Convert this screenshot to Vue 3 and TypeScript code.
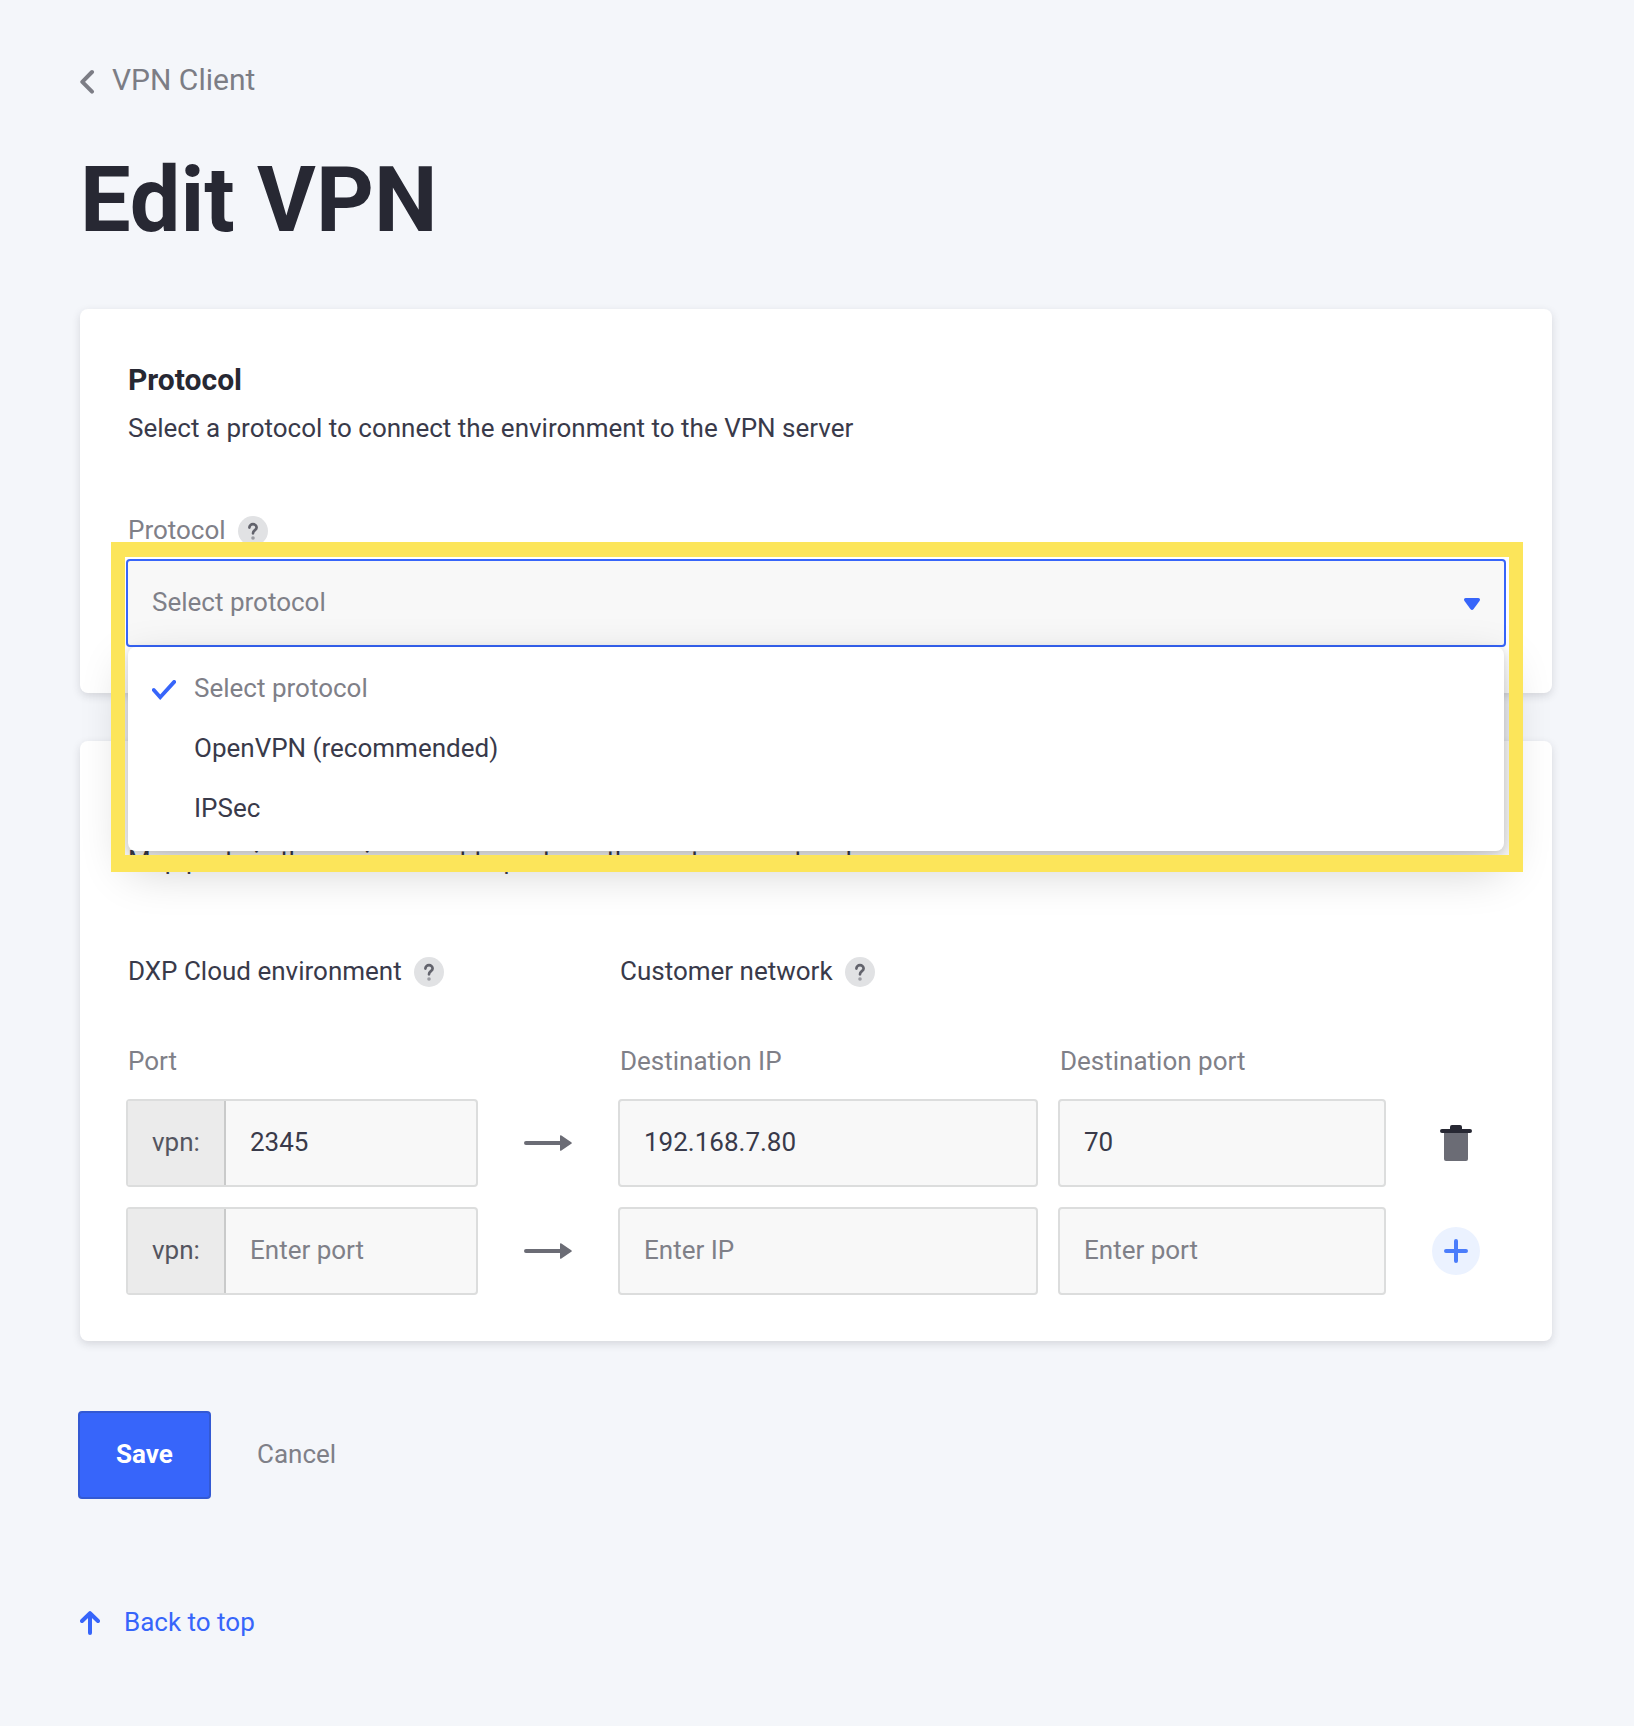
<script setup lang="ts">
import { h, ref } from 'vue'
import type { FunctionalComponent } from 'vue'

interface Forward {
  port: string
  ip: string
  destination: string
}

const protocols: string[] = ['Select protocol', 'OpenVPN (recommended)', 'IPSec']
const selected = ref<number>(0)

const forwards = ref<Forward[]>([
  { port: '2345', ip: '192.168.7.80', destination: '70' },
  { port: '', ip: '', destination: '' },
])

const HelpIcon: FunctionalComponent = () =>
  h('svg', { width: 30, height: 30, viewBox: '0 0 30 30', fill: 'none' }, [
    h('circle', { cx: 15, cy: 15, r: 15, fill: '#e1e2e4' }),
    h('path', {
      d: 'M11.4 11.6C11.4 9.6 13 8.2 15 8.2S18.6 9.6 18.6 11.5C18.6 14.2 15 14.2 15 17.3',
      stroke: '#62636c',
      'stroke-width': 2.7,
      'stroke-linecap': 'round',
    }),
    h('circle', { cx: 15, cy: 22, r: 1.8, fill: '#9b9ca2' }),
  ])
</script>

<template>
  <main class="page">
    <nav class="crumb">
      <svg width="16" height="26" viewBox="0 0 16 26" fill="none">
        <path d="M12 3 2.3 12.8 12 22.6" stroke="#7c7d85" stroke-width="4" stroke-linecap="round" stroke-linejoin="round" />
      </svg>
      <span>VPN Client</span>
    </nav>
    <h1>Edit VPN</h1>

    <section class="card">
      <h2>Protocol</h2>
      <p class="desc">Select a protocol to connect the environment to the VPN server</p>
      <div class="label muted">Protocol <HelpIcon class="help" /></div>
      <div class="picker">
        <div class="select">
          <span>{{ protocols[selected] }}</span>
          <svg width="16" height="12" viewBox="0 0 16 12">
            <path d="M1.6 0H14.4Q16 0 16 1.5Q16 2.2 15.5 2.9L9.6 11Q8 13 6.4 11L.5 2.9Q0 2.2 0 1.5Q0 0 1.6 0Z" fill="#3765fa" />
          </svg>
        </div>
        <ul class="menu">
          <li v-for="(name, i) in protocols" :key="name" :class="{ current: i === selected }" @click="selected = i">
            <svg v-if="i === selected" width="24" height="20" viewBox="0 0 24 20" fill="none">
              <path d="M1.8 10 8.2 17.2 22.2 1.9" stroke="#3765fa" stroke-width="3.8" stroke-linecap="round" />
            </svg>
            <span>{{ name }}</span>
          </li>
        </ul>
        <div class="highlight"></div>
      </div>
    </section>

    <section class="card forwarding">
      <p class="desc">Map ports in the environment to ports on the customer network</p>
      <div class="grid heads">
        <div class="label">DXP Cloud environment <HelpIcon class="help" /></div>
        <div class="label">Customer network <HelpIcon class="help" /></div>
      </div>
      <div class="grid cols">
        <div class="label muted">Port</div>
        <div class="label muted">Destination IP</div>
        <div class="label muted">Destination port</div>
      </div>
      <div v-for="(f, i) in forwards" :key="i" class="row">
        <div class="group">
          <span class="prefix">vpn:</span>
          <span class="value" :class="{ empty: !f.port }">{{ f.port || 'Enter port' }}</span>
        </div>
        <svg class="arrow" width="48" height="16" viewBox="0 0 48 16">
          <path d="M2 6H36V1Q36-.4 37.4.5L47.3 7.2Q48.4 8 47.3 8.8L37.4 15.5Q36 16.4 36 15V10H2A2 2 0 0 1 2 6Z" fill="#6b6c75" />
        </svg>
        <div class="field ip" :class="{ empty: !f.ip }">{{ f.ip || 'Enter IP' }}</div>
        <div class="field dest" :class="{ empty: !f.destination }">{{ f.destination || 'Enter port' }}</div>
        <svg v-if="f.port" class="action" width="48" height="48" viewBox="0 0 48 48">
          <path d="M12 14H36V40Q36 42 34 42H14Q12 42 12 40Z" fill="#6b6c75" />
          <path d="M20 6H28Q30 6 30 8V10H38A2 2 0 0 1 38 14H10A2 2 0 0 1 10 10H18V8Q18 6 20 6Z" fill="#272833" />
        </svg>
        <svg v-else class="action" width="48" height="48" viewBox="0 0 48 48">
          <circle cx="24" cy="24" r="24" fill="#ebf2ff" />
          <path d="M24 14V34M14 24H34" stroke="#4b7dfb" stroke-width="4" stroke-linecap="round" />
        </svg>
      </div>
    </section>

    <div class="actions">
      <button class="save">Save</button>
      <span class="cancel">Cancel</span>
    </div>
    <a class="top">
      <svg width="20" height="24" viewBox="0 0 20 24" fill="none">
        <path d="M10 3V22M2 10 10 2.2 18 10" stroke="#3765fa" stroke-width="4" stroke-linecap="round" stroke-linejoin="round" />
      </svg>
      <span>Back to top</span>
    </a>
  </main>
</template>

<style>
body {
  background: #f4f6fa;
}
</style>

<style scoped>
.page {
  box-sizing: border-box;
  width: 1634px;
  height: 1726px;
  padding: 60px 82px 0 80px;
  background: #f4f6fa;
  font: 26px/40px Roboto, sans-serif;
  color: #393a4a;
}
.crumb {
  display: flex;
  align-items: center;
  gap: 16px;
  font-size: 30px;
  color: #7c7d85;
}
.crumb svg {
  margin-top: 4px;
}
h1 {
  margin: 51px 0 58px;
  font-size: 90px;
  line-height: 100px;
  font-weight: 700;
  color: #272833;
}
.card {
  box-sizing: border-box;
  height: 384px;
  padding: 51px 46px 46px;
  border-radius: 8px;
  background: #fff;
  box-shadow: 0 3px 9px rgba(39, 40, 51, 0.15);
}
h2 {
  margin: 0 2px 8px;
  font-size: 30px;
  line-height: 40px;
  font-weight: 700;
  color: #272833;
}
.desc {
  margin: 0 2px;
}
.label {
  display: flex;
  align-items: center;
  gap: 12px;
  margin-left: 2px;
  height: 40px;
}
.muted {
  color: #7f8088;
}
.help {
  margin-top: 2px;
}
.card > .label {
  margin-top: 62px;
  margin-bottom: 9px;
}
.picker {
  position: relative;
}
.select {
  box-sizing: border-box;
  display: flex;
  align-items: center;
  justify-content: space-between;
  height: 88px;
  padding: 0 24px 2px;
  border: 2px solid #3765fa;
  border-radius: 4px;
  background: #f8f8f8;
  color: #7f8088;
}
.select svg {
  margin-top: 4px;
}
.menu {
  position: absolute;
  z-index: 1;
  top: 88px;
  left: 2px;
  right: 2px;
  box-sizing: border-box;
  height: 204px;
  margin: 0;
  padding: 11px 24px;
  list-style: none;
  border-radius: 8px;
  background: #fff;
  box-shadow: 0 2px 8px rgba(0, 0, 0, 0.14), 0 18px 48px rgba(0, 0, 0, 0.2);
}
.menu li {
  display: flex;
  align-items: center;
  gap: 18px;
  height: 60px;
  padding-left: 42px;
}
.menu li.current {
  padding-left: 0;
  color: #7f8088;
}
.menu li svg {
  margin-top: 3px;
}
.highlight {
  position: absolute;
  z-index: 2;
  top: -17px;
  left: -15px;
  right: -17px;
  height: 298px;
  border: solid #fce55a;
  border-width: 15px 14px 17px;
  pointer-events: none;
}
.forwarding {
  height: 600px;
  margin-top: 48px;
  padding-top: 99px;
}
.grid {
  display: grid;
  grid-template-columns: 492px 440px 1fr;
}
.heads {
  margin-top: 71px;
}
.cols {
  margin: 50px 0 18px;
}
.row {
  display: flex;
  align-items: center;
  height: 88px;
}
.row + .row {
  margin-top: 20px;
}
.group,
.field {
  box-sizing: border-box;
  height: 88px;
  border: 2px solid #dcdddd;
  border-radius: 4px;
  background: #f8f8f8;
  line-height: 82px;
}
.group {
  display: flex;
  width: 352px;
}
.prefix {
  box-sizing: border-box;
  width: 98px;
  padding-left: 24px;
  border-right: 2px solid #c9caca;
  background: #ebebeb;
  color: #54555f;
}
.value {
  padding-left: 24px;
}
.empty {
  color: #7f8088;
}
.arrow {
  margin: 0 46px;
}
.ip {
  width: 420px;
  padding-left: 24px;
}
.dest {
  width: 328px;
  margin-left: 20px;
  padding-left: 24px;
}
.action {
  margin-left: 46px;
}
.actions {
  display: flex;
  gap: 46px;
  margin: 70px 0 103px -2px;
  line-height: 82px;
}
.save {
  box-sizing: border-box;
  width: 133px;
  height: 88px;
  padding: 0 0 2px;
  border: 2px solid #3359d3;
  border-radius: 4px;
  background: #3765fa;
  color: #fff;
  font: 700 26px/40px Roboto, sans-serif;
}
.cancel {
  padding-top: 2px;
  color: #7f8088;
}
.top {
  display: flex;
  align-items: center;
  gap: 24px;
  color: #3765fa;
}
.top svg {
  margin-top: 2px;
}
</style>
